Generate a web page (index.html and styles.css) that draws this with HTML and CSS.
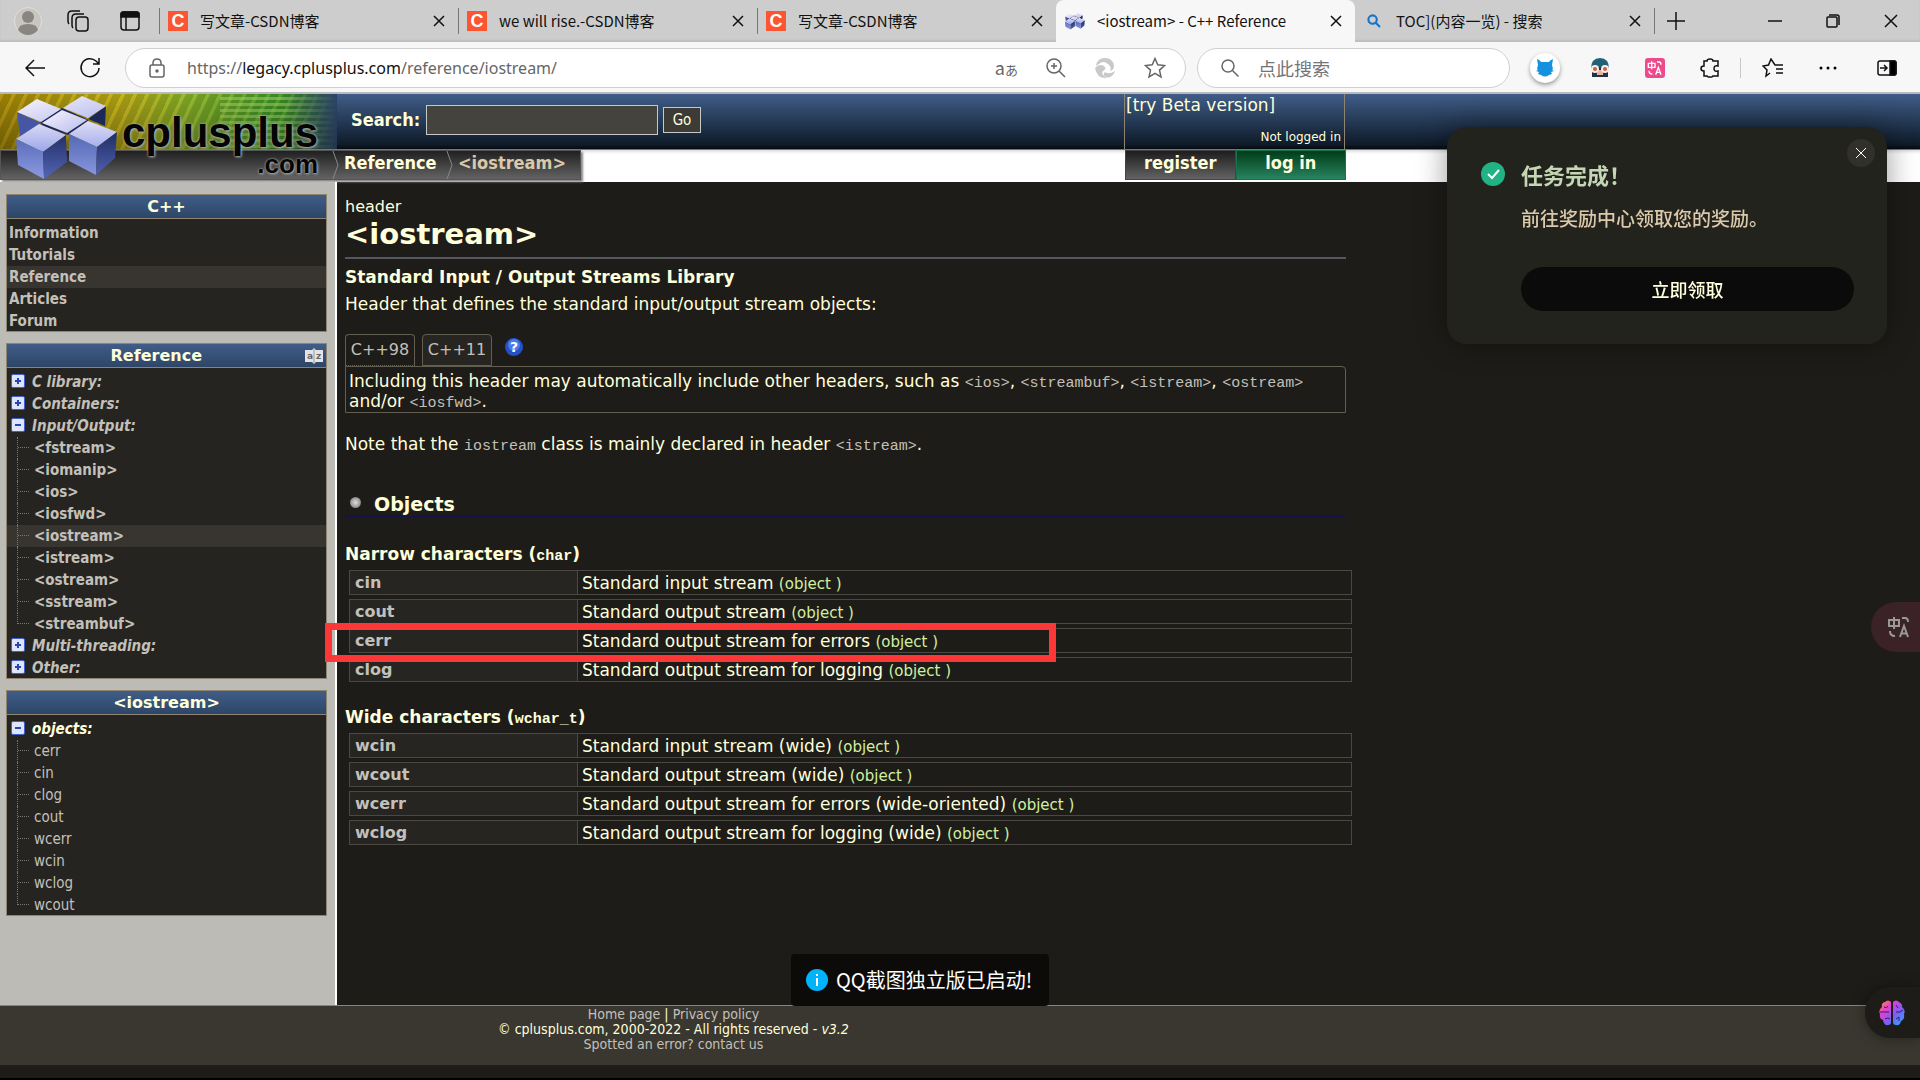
FILE: index.html
```html
<!DOCTYPE html>
<html lang="zh-CN">
  <head>
    <meta charset="UTF-8" />
    <meta name="viewport" content="width=device-width, initial-scale=1" />
    <title>&lt;iostream&gt; - C++ Reference</title>
    <link rel="stylesheet" href="styles.css">
  </head>
  <body>
    <!-- shared shapes -->
    <svg class="defs" width="0" height="0" aria-hidden="true">
      <linearGradient id="top" x1="0" y1="0" x2="1" y2="1"><stop offset="0" stop-color="#fbf6fb" /><stop offset="1" stop-color="#b4baf0" /></linearGradient>
      <linearGradient id="top2" x1="0" y1="0" x2="0" y2="1"><stop offset="0" stop-color="#e0dff6" /><stop offset="1" stop-color="#9ba6ea" /></linearGradient>
      <linearGradient id="lit" x1="0" y1="0" x2="0" y2="1"><stop offset="0" stop-color="#5468b4" /><stop offset="1" stop-color="#8d9ae0" /></linearGradient>
      <linearGradient id="dark" x1="0" y1="0" x2="0" y2="1"><stop offset="0" stop-color="#1f2d64" /><stop offset="1" stop-color="#5465b4" /></linearGradient>
      <symbol id="i-close" viewBox="0 0 12 12"><path d="M1 1l10 10M11 1L1 11" /></symbol>
      <symbol id="i-search" viewBox="0 0 20 20"><circle cx="8" cy="8" r="6" /><path d="M12.500 12.500L18.500 18.500" /></symbol>
      <symbol id="i-star" viewBox="0 0 22 22"><path d="M11 1.500l2.800 6.300 6.800.700-5.100 4.600 1.500 6.800-6-3.500-6 3.500 1.500-6.800L1.400 8.500l6.800-.700z" /></symbol>
      <symbol id="i-trans" viewBox="0 0 24 24"><path d="M2 5h10v6H2zM7 2v12M15 3h3q3 0 3 4M3 16q0 5 5 5M13 22l4-11 4 11M14.500 18.500h5" /></symbol>
      <symbol id="i-cubes" viewBox="0 0 102 84">
        <path fill="#4557a4" d="M1 16L25 27 4 41z" />
        <path fill="#1c2958" d="M90 10L72 23 89 30z" />
        <path fill="#1c2958" d="M24 26L46 12 73 24 52 39 27 30z" />
        <path fill="url(#top)" d="M1 16L21 3 45 13 25 26zM47 12L66 0 90 10 72 22z" />
        <path fill="url(#top)" d="M26 27L46 14 71 24 51 37z" />
        <path fill="url(#top2)" d="M0 43L23 28 50 39 27 56zM53 38L72 25 101 36 81 51z" />
        <path fill="url(#lit)" d="M0 43L27 56 28 83 2 69zM53 38L81 51 80 79 53 65z" />
        <path fill="url(#dark)" d="M27 56L50 39 51 66 28 83zM81 51L101 36 99 62 80 79z" />
      </symbol>
    </svg>

    <div class="tabbar">
      <div class="tab-tools">
        <svg width="28" height="28" viewBox="0 0 28 28"><circle cx="14" cy="14" r="13.500" fill="#c9c6c1" stroke="#e0ded9" /><circle cx="14" cy="10" r="6" fill="#898681" /><path d="M4 23q1-6 10-6t10 6q-4 5-10 5T4 23z" fill="#898681" /></svg>
        <svg class="line" width="22" height="22" viewBox="0 0 22 22"><rect x="9" y="7" width="12" height="14" rx="3" /><path d="M6 18q-1-1-1-3V8q0-4 4-4h8M2 14q-1-1-1-3V5q0-4 4-4h8" /></svg>
        <svg class="line" width="20" height="20" viewBox="0 0 20 20"><rect x="1" y="1" width="18" height="18" rx="3" /><path d="M1 3q0-2 2-2h14q2 0 2 2v3H1z" fill="#111" /><path d="M6 6v13" /></svg>
      </div>
      <div class="tab">
        <span class="csdn">C</span><span class="tab-title">写文章-CSDN博客</span>
        <button aria-label="关闭"><svg width="12" height="12"><use href="#i-close" /></svg></button>
      </div>
      <div class="tab">
        <span class="csdn">C</span><span class="tab-title">we will rise.-CSDN博客</span>
        <button aria-label="关闭"><svg width="12" height="12"><use href="#i-close" /></svg></button>
      </div>
      <div class="tab">
        <span class="csdn">C</span><span class="tab-title">写文章-CSDN博客</span>
        <button aria-label="关闭"><svg width="12" height="12"><use href="#i-close" /></svg></button>
      </div>
      <div class="tab active">
        <svg class="favicon" width="20" height="17"><use href="#i-cubes" /></svg><span class="tab-title">&lt;iostream&gt; - C++ Reference</span>
        <button aria-label="关闭"><svg width="12" height="12"><use href="#i-close" /></svg></button>
      </div>
      <div class="tab last">
        <svg class="favicon bing" width="20" height="14"><use href="#i-search" /></svg><span class="tab-title">TOC](内容一览) - 搜索</span>
        <button aria-label="关闭"><svg width="12" height="12"><use href="#i-close" /></svg></button>
      </div>
      <button class="new-tab" aria-label="新建标签页"><svg class="line" width="18" height="18" viewBox="0 0 18 18"><path d="M9 0v18M0 9h18" /></svg></button>
      <div class="win-btns">
        <button aria-label="最小化"><svg class="line" width="14" height="14" viewBox="0 0 14 14"><path d="M0 7h14" /></svg></button>
        <button aria-label="还原"><svg class="line" width="14" height="14" viewBox="0 0 14 14"><rect x="1" y="3" width="10" height="10" rx="1" /><path d="M3 1h8q2 0 2 2v8" /></svg></button>
        <button aria-label="关闭窗口"><svg class="line" width="14" height="14" viewBox="0 0 14 14"><path d="M1 1l12 12M13 1L1 13" /></svg></button>
      </div>
    </div>

    <div class="toolbar">
      <button class="nav" aria-label="返回"><svg class="line" width="20" height="18" viewBox="0 0 20 18"><path d="M9 1L1 9l8 8M1 9h19" /></svg></button>
      <button class="nav reload" aria-label="刷新"><svg class="line" width="22" height="22" viewBox="0 0 22 22"><path d="M20 11a9 9 0 1 1-3-7l3 3M20 1v6h-6" /></svg></button>
      <div class="address">
        <svg class="line grey" width="16" height="20" viewBox="0 0 16 20"><rect x="1" y="7" width="14" height="12" rx="2" /><path d="M4 7V5q0-4 4-4t4 4v2" /><circle cx="8" cy="13" r="1" fill="#555" /></svg>
        <span class="url">https://<b>legacy.cplusplus.com</b>/reference/iostream/</span>
        <button class="aa" aria-label="翻译">a<small>あ</small></button>
        <button aria-label="缩放"><svg class="line grey" width="20" height="20" viewBox="0 0 20 20"><circle cx="8" cy="8" r="7" /><path d="M13 13l6 6M8 5v6M5 8h6" /></svg></button>
        <button aria-label="状态"><svg width="22" height="22" viewBox="0 0 22 22" fill="#c9c9c9"><path d="M2 9Q3 1 11 1q8 0 9 8 0 4-4 5 2-4-2-7-5-4-9 0-2 1-3 2z" /><path d="M1 11q4-5 9-2 3 3-1 5-3 3 4 7Q3 22 1 11z" /><path d="M11 15q4 3 10-1-3 8-9 6-4-2-1-5z" /></svg></button>
        <button aria-label="收藏"><svg class="line grey" width="22" height="22"><use href="#i-star" /></svg></button>
      </div>
      <div class="quick">
        <svg class="line grey" width="20" height="20"><use href="#i-search" /></svg>
        <input type="text" placeholder="点此搜索" aria-label="点此搜索" />
      </div>
      <div class="ext">
        <button class="cat" aria-label="扩展"><svg width="18" height="18" viewBox="0 0 18 18"><path fill="#1492df" d="M1 0q3 1 4 3h8q1-2 4-3l-1 6 1 4-1 1 2 1-3 1 1 2-3 1q-4 3-8 0l-3-1 1-2-3-1 2-1-1-1 1-4z" /></svg></button>
        <button aria-label="扩展"><svg width="20" height="20" viewBox="0 0 20 20"><path fill="#226078" d="M1 11q0-11 9-11t9 11z" /><path fill="#223441" d="M2 9h16v10H2z" /><path fill="#e8b4a0" d="M7 12h6v5H7z" /><circle cx="5" cy="11" r="3" fill="#d9573f" stroke="#f4eee8" stroke-width="2" /><circle cx="15" cy="11" r="3" fill="#d9573f" stroke="#f4eee8" stroke-width="2" /></svg></button>
        <button class="pink" aria-label="翻译扩展"><svg width="16" height="16"><use href="#i-trans" /></svg></button>
        <button aria-label="扩展管理"><svg class="line" width="20" height="20" viewBox="0 0 20 20"><path d="M4 3h3q0-2 3-2t3 2h5v5q-4-1-4 2.500t4 2.500v5h-5q0 1-3 1t-3-1H4v-5q-3 0-3-2.500T4 8z" /></svg></button>
        <i class="bar"></i>
        <button aria-label="收藏夹"><svg class="line" width="22" height="20" viewBox="0 0 22 20"><path d="M20 7h-7L9 1 6.500 7 1 8l4 4-1 6 4-3M14 11h7M14 15h7M14 7h7" /></svg></button>
        <button aria-label="更多"><svg width="18" height="4" viewBox="0 0 18 4"><circle cx="2" cy="2" r="1.500" /><circle cx="9" cy="2" r="1.500" /><circle cx="16" cy="2" r="1.500" /></svg></button>
        <button class="sidebar-btn" aria-label="侧栏"><svg class="line" width="20" height="16" viewBox="0 0 20 16"><rect x="1" y="1" width="18" height="14" rx="2" /><path d="M13 1h5q1 0 1 2v10q0 2-1 2h-5z" fill="#000" /><path d="M3 8h7M7 5l3 3-3 3" /></svg></button>
      </div>
    </div>

    <header class="site-head">
      <a class="logo" href="#">
        <svg width="102" height="84"><use href="#i-cubes" /></svg>
        <span class="logo-name">cplusplus<em>.com</em></span>
      </a>
      <form class="search">
        <label for="q">Search:</label>
        <input id="q" type="text" />
        <button type="button">Go</button>
      </form>
      <div class="user">
        <a href="#">[try Beta version]</a>
        <span>Not logged in</span>
      </div>
    </header>
    <nav class="crumbs">
      <div class="trail">
        <svg width="8" height="28" viewBox="0 0 8 28"><path d="M1 0l5 14-5 14" /></svg>
        <a href="#">Reference</a>
        <svg width="8" height="28" viewBox="0 0 8 28"><path d="M1 0l5 14-5 14" /></svg>
        <a class="cur" href="#">&lt;iostream&gt;</a>
      </div>
      <div class="login">
        <a href="#">register</a>
        <a class="green" href="#">log in</a>
      </div>
    </nav>

    <div class="page">
      <aside class="side">
        <section class="box">
          <h3>C++</h3>
          <ul>
            <li><a href="#">Information</a></li>
            <li><a href="#">Tutorials</a></li>
            <li class="here"><a href="#">Reference</a></li>
            <li><a href="#">Articles</a></li>
            <li><a href="#">Forum</a></li>
          </ul>
        </section>
        <section class="box">
          <h3 class="with-icon">Reference
            <svg width="20" height="18" viewBox="0 0 20 18"><path d="M1 3h7l2-2 2 2h7v12h-7l-2 2-2-2H1z" fill="#e4e4e6" /><path d="M10 2v15" stroke="#999" /><text x="3" y="12">a</text><text x="12" y="12">z</text></svg>
          </h3>
          <ul>
            <li class="node plus"><a href="#">C library:</a></li>
            <li class="node plus"><a href="#">Containers:</a></li>
            <li class="node"><a href="#">Input/Output:</a>
              <ul class="tree">
                <li><a href="#">&lt;fstream&gt;</a></li>
                <li><a href="#">&lt;iomanip&gt;</a></li>
                <li><a href="#">&lt;ios&gt;</a></li>
                <li><a href="#">&lt;iosfwd&gt;</a></li>
                <li class="here"><a href="#">&lt;iostream&gt;</a></li>
                <li><a href="#">&lt;istream&gt;</a></li>
                <li><a href="#">&lt;ostream&gt;</a></li>
                <li><a href="#">&lt;sstream&gt;</a></li>
                <li><a href="#">&lt;streambuf&gt;</a></li>
              </ul>
            </li>
            <li class="node plus"><a href="#">Multi-threading:</a></li>
            <li class="node plus"><a href="#">Other:</a></li>
          </ul>
        </section>
        <section class="box">
          <h3>&lt;iostream&gt;</h3>
          <ul>
            <li class="node open"><a href="#">objects:</a>
              <ul class="tree plain">
                <li><a href="#">cerr</a></li>
                <li><a href="#">cin</a></li>
                <li><a href="#">clog</a></li>
                <li><a href="#">cout</a></li>
                <li><a href="#">wcerr</a></li>
                <li><a href="#">wcin</a></li>
                <li><a href="#">wclog</a></li>
                <li><a href="#">wcout</a></li>
              </ul>
            </li>
          </ul>
        </section>
      </aside>

      <main class="content">
        <div class="kind">header</div>
        <h1>&lt;iostream&gt;</h1>
        <div class="sub">Standard Input / Output Streams Library</div>
        <p class="intro">Header that defines the standard input/output stream objects:</p>
        <div class="versions">
          <button class="on">C++98</button>
          <button>C++11</button>
          <svg width="18" height="18" viewBox="0 0 18 18"><circle cx="9" cy="9" r="9" fill="#2450c8" /><circle cx="9" cy="7" r="6" fill="#4c7be6" /><text x="9" y="14">?</text></svg>
        </div>
        <div class="note">Including this header may automatically include other headers, such as <code>&lt;ios&gt;</code>, <code>&lt;streambuf&gt;</code>, <code>&lt;istream&gt;</code>, <code>&lt;ostream&gt;</code> and/or <code>&lt;iosfwd&gt;</code>.</div>
        <p class="decl">Note that the <code>iostream</code> class is mainly declared in header <code>&lt;istream&gt;</code>.</p>
        <h2>Objects</h2>
        <h4>Narrow characters (<code>char</code>)</h4>
        <table>
          <tr><th scope="row"><a href="#">cin</a></th><td>Standard input stream <i>(object )</i></td></tr>
          <tr><th scope="row"><a href="#">cout</a></th><td>Standard output stream <i>(object )</i></td></tr>
          <tr><th scope="row"><a href="#">cerr</a><span class="marker"></span></th><td>Standard output stream for errors <i>(object )</i></td></tr>
          <tr><th scope="row"><a href="#">clog</a></th><td>Standard output stream for logging <i>(object )</i></td></tr>
        </table>
        <h4>Wide characters (<code>wchar_t</code>)</h4>
        <table>
          <tr><th scope="row"><a href="#">wcin</a></th><td>Standard input stream (wide) <i>(object )</i></td></tr>
          <tr><th scope="row"><a href="#">wcout</a></th><td>Standard output stream (wide) <i>(object )</i></td></tr>
          <tr><th scope="row"><a href="#">wcerr</a></th><td>Standard output stream for errors (wide-oriented) <i>(object )</i></td></tr>
          <tr><th scope="row"><a href="#">wclog</a></th><td>Standard output stream for logging (wide) <i>(object )</i></td></tr>
        </table>
      </main>
    </div>

    <footer>
      <div class="foot">
        <div><a href="#">Home page</a> | <a href="#">Privacy policy</a></div>
        <div>© cplusplus.com, 2000-2022 - All rights reserved - <i>v3.2</i></div>
        <div><a href="#">Spotted an error? contact us</a></div>
      </div>
    </footer>

    <!-- floating things -->
    <div class="reward">
      <svg class="ok" width="25" height="25" viewBox="0 0 25 25"><circle cx="12" cy="12" r="12" fill="#21b384" /><path d="M7 12l4 4 7-8" fill="none" stroke="#fff" stroke-width="2" /></svg>
      <div class="reward-body">
        <h5>任务完成！</h5>
        <p>前往奖励中心领取您的奖励。</p>
        <button>立即领取</button>
      </div>
      <button class="reward-close" aria-label="关闭"><svg width="12" height="12"><use href="#i-close" /></svg></button>
    </div>
    <button class="float-trans" aria-label="翻译"><svg width="24" height="24"><use href="#i-trans" /></svg></button>
    <button class="float-brain" aria-label="助手">
      <svg width="26" height="26" viewBox="0 0 26 26">
        <defs><linearGradient id="brain" x1="0" y1="0" x2="1" y2="1"><stop offset="0" stop-color="#ff9a1f" /><stop offset=".3" stop-color="#e63fd0" /><stop offset=".6" stop-color="#7d5cf5" /><stop offset="1" stop-color="#21b4ff" /></linearGradient></defs>
        <path fill="url(#brain)" d="M12 2q-3-3-6 0-4 1-3 5-4 3-2 7-1 5 3 6 1 6 5 5 3 0 3-3zM14 2q3-3 6 0 4 2 3 5 4 3 2 7 1 5-3 7-1 5-5 4-3 0-3-3z" />
        <path d="M1 12h9M5 7q3 2 4-1M6 19q3-2 5 0M17 5l2 3M17 12h4l3-2M17 19l3-2v4" fill="none" stroke="#35205f" stroke-width="1" />
      </svg>
    </button>
    <div class="toast"><svg width="22" height="22" viewBox="0 0 22 22"><circle cx="11" cy="11" r="11" fill="#00b3fa" /><path d="M10 5h2v2h-2zM10 9h2v8h-2z" fill="#fff" /></svg>QQ截图独立版已启动!</div>
  </body>
</html>
```
FILE: styles.css
```css
* {
  box-sizing: border-box;
}
body {
  margin: 0;
  min-height: 100vh;
  display: flex;
  flex-direction: column;
  background: #1e1c18;
  color: #ffffdc;
  font: 16px/20px "DejaVu Sans", Verdana, sans-serif;
  border-bottom: 2px solid #000;
}
a {
  color: #c3c0ba;
  text-decoration: none;
}
button {
  padding: 0;
  border: none;
  background: none;
  color: inherit;
  font: inherit;
}
svg {
  display: block;
  flex: none;
}
ul {
  margin: 0;
  padding: 0;
  list-style: none;
}
code {
  font: 15px/15px "Liberation Mono", monospace;
  color: #c3c0ba;
}
.defs {
  position: absolute;
}
.line {
  fill: none;
  stroke: #111;
  stroke-width: 1.5;
}
.grey {
  stroke: #666;
}

/* browser tabs */
.tabbar {
  display: flex;
  height: 42px;
  background: #cdcdcd;
  color: #111;
  font: 15px/20px "Noto Sans CJK SC", sans-serif;
  box-shadow: inset 0 -2px 2px #bdbdbd;
}
.tab-tools {
  display: flex;
  align-items: center;
  gap: 31px;
  width: 159px;
  padding-left: 14px;
}
.tab-tools svg:first-child {
  margin-right: -6px;
}
.tab {
  flex: 0 1 299px;
  display: flex;
  align-items: center;
  position: relative;
  padding: 0 13px 0 9px;
}
.tab::before {
  content: "";
  width: 1px;
  height: 26px;
  margin: 0 8px 0 -9px;
  background: #777;
}
.tab.active {
  background: #f7f7f7;
  border-radius: 8px 8px 0 0;
}
.tab.active::before,
.last::before {
  background: none;
}
.tab-title {
  flex: 1;
  margin-left: 12px;
  white-space: nowrap;
}
.tab button svg {
  fill: none;
  stroke: #111;
  stroke-width: 1.5;
}
.csdn {
  width: 20px;
  height: 20px;
  background: #fc5531;
  color: #fff;
  font: bold 18px/20px "Liberation Sans", sans-serif;
  text-align: center;
}
.bing {
  fill: none;
  stroke: #1473c8;
  stroke-width: 3;
}
.new-tab {
  padding: 0 12px;
  border-left: 1px solid #777;
  margin: 8px 0;
}
.win-btns {
  margin-left: auto;
  padding-right: 22px;
  display: flex;
  align-items: center;
  gap: 44px;
}

/* browser toolbar */
.toolbar {
  display: flex;
  align-items: center;
  height: 52px;
  padding: 2px 23px 0 25px;
  background: #f7f7f7;
  border-bottom: 2px solid #b7b9bd;
  color: #666;
}
.reload {
  margin: 0 24px 0 34px;
}
.address,
.quick {
  display: flex;
  align-items: center;
  height: 40px;
  background: #fff;
  border: 1px solid #d0d0d0;
  border-radius: 20px;
}
.address {
  flex: 1;
  gap: 28px;
  padding: 0 19px 0 23px;
}
.url {
  flex: 1;
  margin-left: -6px;
  font: 16px/24px "Noto Sans", sans-serif;
}
.url b {
  color: #111;
  font-weight: normal;
}
.aa {
  font: 18px/20px "Noto Sans CJK JP", sans-serif;
}
.aa small {
  font-size: 13px;
}
.quick {
  flex: 0 1 313px;
  margin-left: 11px;
  padding: 0 22px;
  gap: 18px;
}
.quick input {
  flex: 1;
  min-width: 0;
  padding: 0;
  border: none;
  outline: none;
  background: none;
  font: 18px/24px "Noto Sans CJK SC", sans-serif;
}
.quick input::placeholder {
  color: #757575;
}
.ext {
  display: flex;
  align-items: center;
  gap: 35px;
  margin-left: 20px;
}
.ext .bar {
  margin: 0 -14px 0 -15px;
}
.ext .sidebar-btn {
  margin-left: 5px;
}
.cat {
  padding: 6px;
  margin-right: -5px;
  border-radius: 50%;
  background: #fff;
  box-shadow: 0 2px 4px #999;
}
.pink {
  padding: 2px;
  border-radius: 3px;
  background: #ee4b8c;
}
.pink svg,
.float-trans svg {
  fill: none;
  stroke: #fff;
  stroke-width: 2;
}
.bar {
  width: 1px;
  height: 20px;
  background: #c8c8c8;
}

/* site header */
.site-head {
  display: flex;
  height: 56px;
  background: linear-gradient(#405d88, #0e1b29 92%, #050a10);
  border-bottom: 1px solid #777;
}
.logo {
  flex: 0 0 337px;
  height: 55px;
  position: relative;
  z-index: 1;
  background:
    linear-gradient(transparent, #0004),
    linear-gradient(90deg, transparent 84%, #2c4569),
    repeating-linear-gradient(transparent 0 3px, #a9d46a88 3px 6px) 220px 0 / 117px 55px no-repeat,
    repeating-linear-gradient(115deg, #e8e04822 0 3px, #30500033 4px 11px),
    linear-gradient(90deg, #b08a08, #c4ac18 35%, #8fb62c 55%, #3f9a2c 80%, #2f7d22);
}
.logo > svg {
  position: absolute;
  left: 16px;
  top: 2px;
}
.logo-name {
  position: absolute;
  left: 122px;
  top: 19px;
  width: 196px;
  color: #050505;
  font: bold 42px/40px "Liberation Sans", sans-serif;
  text-shadow: 0 0 2px #bbb, 1px 1px 3px #aaa;
}
.logo-name em {
  display: block;
  font: bold 26px/22px "Liberation Sans", sans-serif;
  text-align: right;
}
.search {
  display: flex;
  align-items: center;
  gap: 5px;
  width: 787px;
  padding: 0 0 3px 14px;
  font-family: "DejaVu Sans Condensed", "DejaVu Sans", sans-serif;
}
.search label {
  width: 70px;
  font-weight: bold;
  font-size: 18px;
}
.search input {
  width: 232px;
  height: 30px;
  border: 1px solid #c8c8c8;
  background: #45433d;
  color: inherit;
}
.search button {
  width: 38px;
  height: 26px;
  border: 1px solid #c8c8c8;
  background: #3d3b36;
  font-size: 15px;
}
.user {
  display: flex;
  flex-direction: column;
  justify-content: space-between;
  width: 221px;
  padding: 1px 3px 4px 1px;
  border: solid #8f8470;
  border-width: 0 1px;
}
.user a {
  color: #ffffdc;
  font-size: 17px;
}
.user span {
  text-align: right;
  font-size: 12px;
  line-height: 16px;
}
.crumbs {
  display: flex;
  height: 32px;
  background: linear-gradient(#ddd, #fff 4px);
  font: bold 18px/20px "DejaVu Sans Condensed", "DejaVu Sans", sans-serif;
}
.trail {
  display: flex;
  width: 581px;
  height: 30px;
  padding-left: 331px;
  margin-right: 544px;
  background: linear-gradient(#202020, #636363);
  border: 1px solid #555;
  box-shadow: 2px 2px 2px #888;
}
.trail svg {
  fill: none;
  stroke: #888;
}
.trail a {
  width: 106px;
  padding: 2px 0 0 4px;
  color: #ffffdc;
}
.trail .cur {
  color: #d9c8ab;
}
.login {
  display: flex;
  width: 221px;
  height: 30px;
  text-align: center;
}
.login a {
  flex: 1;
  padding-top: 2px;
  color: #ffffdc;
  background: linear-gradient(#1d1d1d, #636363);
  border: 1px solid #444;
}
.login .green {
  background: linear-gradient(#023c18, #27845f);
  border-color: #15724b;
}

/* page */
.page {
  flex: 1;
  display: flex;
}
.side {
  width: 337px;
  padding: 12px 8px 0 6px;
  background: #bdbbb6;
  border-right: 2px solid #fff;
}
.box {
  margin-bottom: 11px;
  background: #262420;
  border: 1px solid #8f8470;
}
.box h3 {
  height: 24px;
  margin: 0;
  background: linear-gradient(#405d88, #2d4668);
  border-bottom: 1px solid #8f8470;
  font-size: 16px;
  line-height: 23px;
  text-align: center;
}
.box h3.with-icon {
  display: flex;
  align-items: center;
  justify-content: flex-end;
  gap: 102px;
  padding-right: 2px;
}
.with-icon text {
  fill: #666;
  font: bold 9px "DejaVu Sans", sans-serif;
}
.box > ul {
  padding-top: 3px;
  margin-bottom: -1px;
}
.box li > a {
  display: block;
  padding-left: 2px;
  font: bold 15px/22px "DejaVu Sans Condensed", "DejaVu Sans", sans-serif;
}
.box .here {
  background: #38342f;
}
.box .node {
  position: relative;
}
.box .node > a {
  padding-left: 25px;
  font-style: italic;
}
.box .open > a {
  color: #ffffdc;
}
.node::before {
  content: "";
  position: absolute;
  left: 4px;
  top: 3px;
  width: 12px;
  height: 12px;
  border: 1px solid #4160d0;
  border-radius: 2px;
  background: linear-gradient(#2846b0, #2846b0) center / 6px 2px no-repeat, #dde4fb;
}
.plus::before {
  background: linear-gradient(#2846b0, #2846b0) center / 6px 2px no-repeat,
    linear-gradient(#2846b0, #2846b0) center / 2px 6px no-repeat, #dde4fb;
}
.tree li {
  position: relative;
}
.box .tree li > a {
  padding-left: 27px;
}
.box .plain li > a {
  font-weight: normal;
}
.tree li::before {
  content: "";
  position: absolute;
  left: 10px;
  top: 0;
  width: 12px;
  height: 22px;
  border-left: 1px dotted #777;
  background: repeating-linear-gradient(90deg, #777 0 1px, transparent 1px 2px) 0 10px / 12px 1px no-repeat;
}
.tree li:last-child::before {
  height: 11px;
}

.content {
  flex: 0 1 1009px;
  min-width: 0;
  padding: 15px 0 0 8px;
}
.content h1 {
  margin: 0 0 8px;
  height: 42px;
  font-size: 29px;
  line-height: 35px;
  border-bottom: 2px solid #55565f;
}
.sub {
  font-weight: bold;
  font-size: 17px;
}
.intro {
  margin: 7px 0 20px;
  font-size: 17px;
}
.versions {
  display: flex;
  gap: 7px;
}
.versions button {
  width: 70px;
  height: 32px;
  border: 1px solid #625f50;
  border-radius: 4px 4px 0 0;
  background: #262521;
  color: #c3c0ba;
}
.versions .on {
  background: #1e1c18;
  border-bottom-style: dotted;
}
.versions svg {
  margin: 4px 0 0 6px;
}
.versions text {
  fill: #fff;
  font-size: 14px;
  font-weight: bold;
  text-anchor: middle;
}
.note {
  padding: 4px 3px 1px;
  border: 1px solid #625f50;
  border-radius: 0 4px 0 0;
  font-size: 17px;
}
.decl {
  margin: 21px 0 38px;
  font-size: 17px;
}
.content h2 {
  display: flex;
  align-items: center;
  height: 25px;
  margin: 0 0 27px;
  font-size: 19px;
  line-height: 24px;
  border-bottom: 1px solid #14124a;
}
.content h2::before {
  content: "";
  width: 11px;
  height: 11px;
  margin: 0 13px 4px 5px;
  border-radius: 50%;
  background: radial-gradient(#ddd, #999 60%, #444);
}
.content h4 {
  margin: 0;
  font-size: 17px;
}
.content h4 code {
  font-weight: bold;
  color: #ffffdc;
}
table {
  width: 1003px;
  margin: 2px 0 21px 4px;
  border-spacing: 0 4px;
  table-layout: fixed;
}
th,
td {
  height: 25px;
  padding: 1px 5px 0;
  border: 1px solid #4b4841;
  line-height: 20px;
}
th {
  position: relative;
  width: 229px;
  text-align: left;
  background: #262521;
}
td {
  padding: 1px 4px 0;
  border-left: none;
  font-size: 17px;
}
td i {
  color: #d0f0a0;
  font-style: normal;
  font-size: 15px;
}
.marker {
  position: absolute;
  left: -25px;
  top: -6px;
  width: 731px;
  height: 39px;
  border: 7px solid #fb3837;
  z-index: 2;
}

footer {
  height: 60px;
  margin-bottom: 13px;
  background: #3a3730;
  border-top: 1px solid #8f8470;
}
.foot {
  max-width: 1347px;
  padding-top: 1px;
  text-align: center;
  font: 14px/15px "DejaVu Sans Condensed", "DejaVu Sans", sans-serif;
}

/* overlays */
.reward {
  position: fixed;
  top: 127px;
  right: 33px;
  display: flex;
  gap: 15px;
  width: 440px;
  height: 217px;
  padding: 35px 33px 33px 34px;
  border-radius: 20px;
  background: #23231e;
  box-shadow: 0 0 30px #0006;
  z-index: 3;
  font: 500 19px/28px "Noto Sans CJK SC", sans-serif;
}
.reward-body {
  flex: 1;
}
.reward h5 {
  margin: 0 0 18px;
  font-size: 22px;
  line-height: 24px;
  color: #c5d6b5;
}
.reward p {
  margin: 0 0 35px;
  color: #dcc9ab;
}
.reward-body button {
  width: 100%;
  height: 44px;
  border-radius: 22px;
  background: #0b0b0b;
  font-size: 18px;
}
.reward-close {
  position: absolute;
  top: 12px;
  right: 12px;
  padding: 8px;
  border-radius: 50%;
  background: #31302b;
}
.reward-close svg {
  stroke: #fff;
}
.float-trans {
  position: fixed;
  right: 0;
  top: 602px;
  width: 49px;
  height: 50px;
  padding-left: 16px;
  border-radius: 25px 0 0 25px;
  background: #3a2226;
}
.float-trans svg {
  stroke: #999;
}
.float-brain {
  position: fixed;
  right: 0;
  bottom: 42px;
  width: 55px;
  height: 51px;
  padding-left: 14px;
  border-radius: 25px 0 0 25px;
  background: #1e1c18;
  box-shadow: 0 0 14px #0006;
}
.toast {
  position: fixed;
  left: 791px;
  bottom: 74px;
  display: flex;
  align-items: center;
  gap: 8px;
  width: 258px;
  height: 52px;
  padding-left: 15px;
  border-radius: 4px;
  background: #0c0b09;
  color: #fff;
  font: 20px/24px "Noto Sans CJK SC", sans-serif;
}
```
